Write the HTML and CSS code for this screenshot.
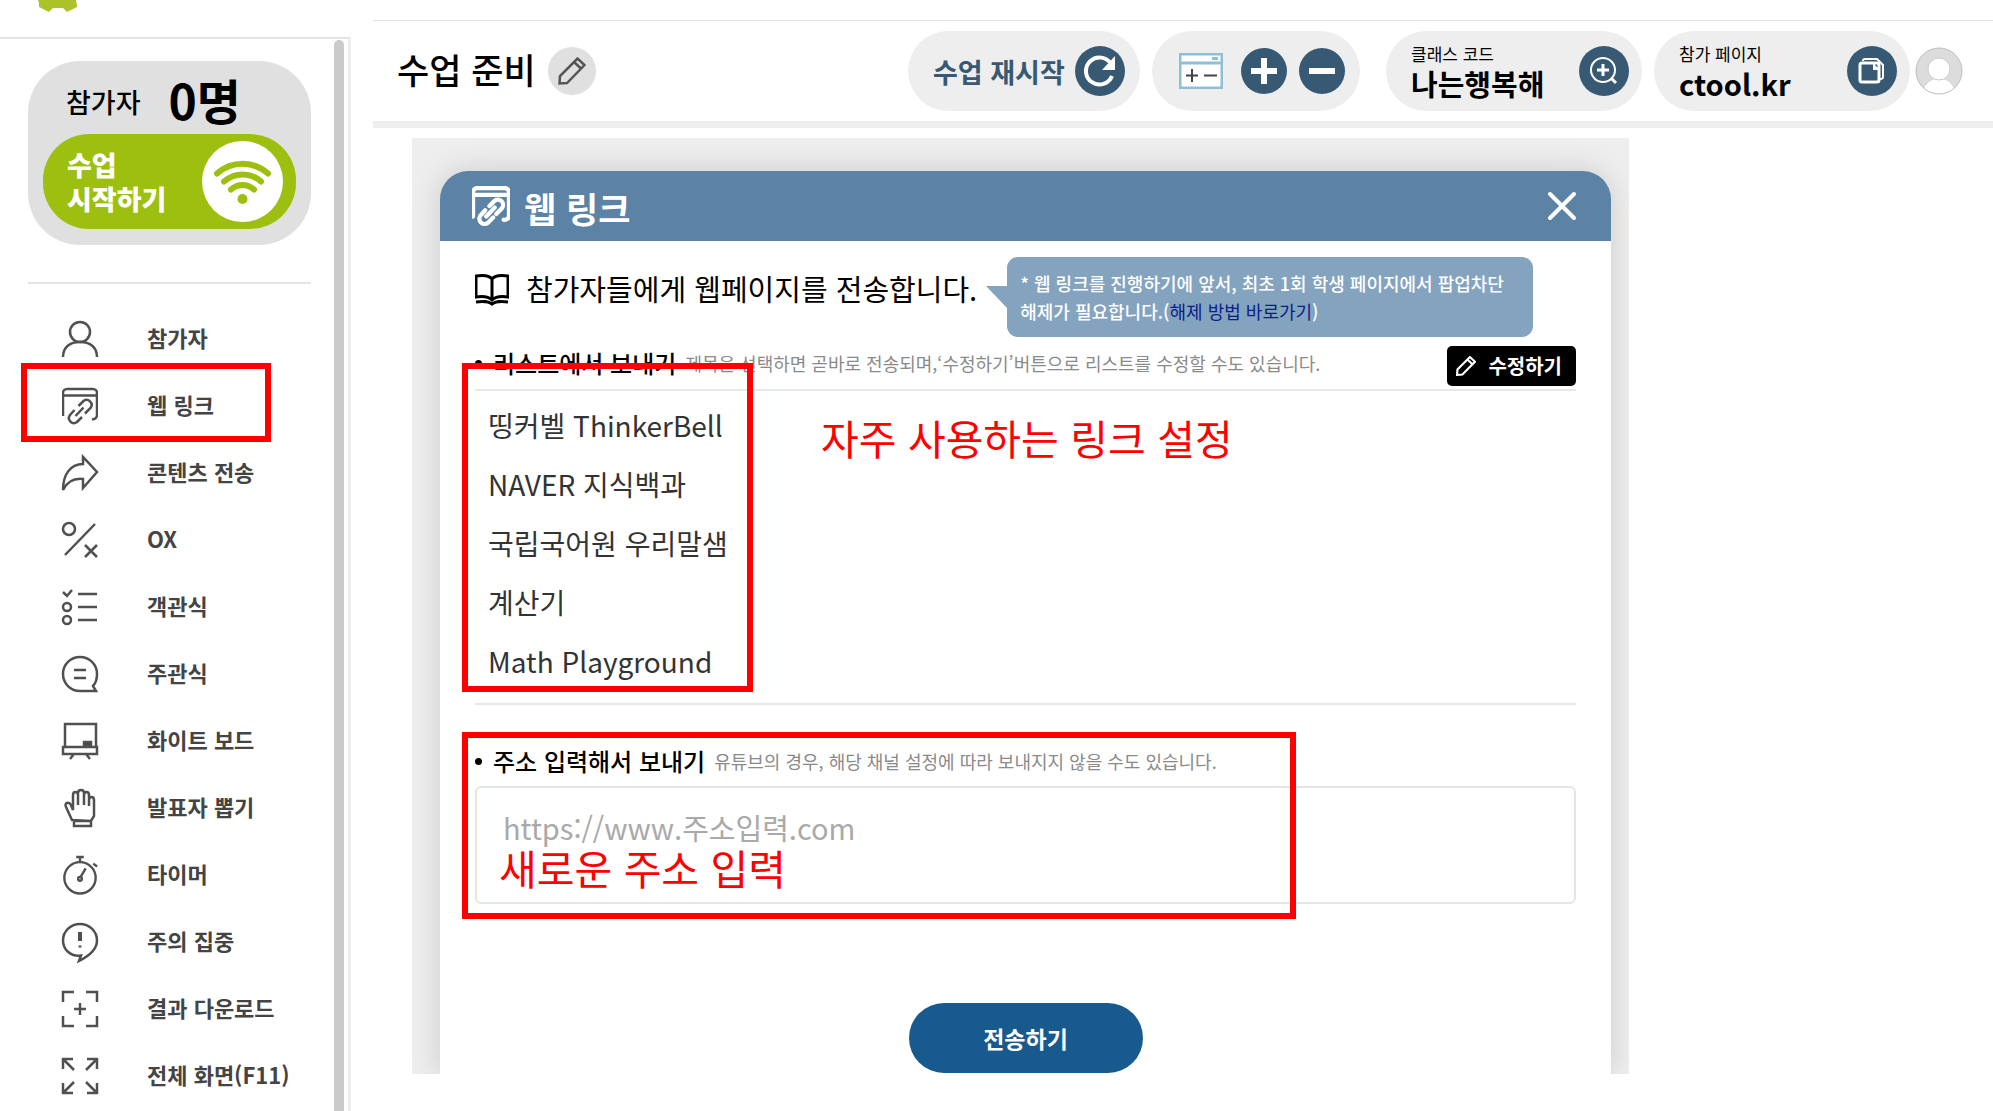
FILE: index.html
```
<!DOCTYPE html>
<html lang="ko">
<head>
    <meta charset="UTF-8">
    <meta name="viewport" content="width=device-width, initial-scale=1.0">
    <title>수업 준비 - 웹 링크</title>
    <link rel="stylesheet" href="styles.css">
</head>
<body>
    <!-- shared icon shapes -->
    <svg class="sprite" aria-hidden="true">
        <symbol id="icon-weblink" viewBox="0 0 36 36">
            <path d="M1 28V5a4 4 0 0 1 4-4h26a4 4 0 0 1 4 4v22a4 4 0 0 1-5 4M1 7.500h34"/>
            <path d="M16.500 18l5-5a5 5 0 0 1 7 7l-5.500 5.500M12.500 22l-4.500 5a5 5 0 0 0 7 7l5-5M13.500 28l8-8.500"/>
        </symbol>
        <symbol id="icon-pencil" viewBox="0 0 28 28">
            <path d="M1.500 26.500l.5-7.500L19.500 1.500l7 6.500L9 26zM16 5l7 6.500"/>
        </symbol>
    </svg>

    <div class="layout">
        <aside class="sidebar">
            <div class="logo">
                <svg width="40" height="12" viewBox="0 0 40 12"><path d="M0 0h38c0 2 1 4 1 7l-10 5-4-4H15l-4 4L1 7V3z" fill="#abc328"/></svg>
            </div>
            <div class="sidebar-main">
                <div class="sidebar-content">
                    <div class="status-card">
                        <p class="count"><span>참가자</span><strong>0명</strong></p>
                        <button type="button" class="start-btn">
                            <span>수업<br>시작하기</span>
                            <svg class="wifi" viewBox="0 0 81 81">
                                <circle cx="40.500" cy="40.500" r="40.500" fill="#fff"/>
                                <g fill="none" stroke="#9dc010" stroke-width="6" stroke-linecap="round">
                                    <path d="M15 32.500c15-13 36-13 51 0"/>
                                    <path d="M22 40.500c11-9.500 26-9.500 37 0"/>
                                    <path d="M29 48.500c7-6 16-6 23 0"/>
                                </g>
                                <circle cx="40.500" cy="58" r="5" fill="#9dc010"/>
                            </svg>
                        </button>
                    </div>
                    <nav class="menu">
                        <a href="#">
                            <svg viewBox="0 0 36 36"><circle cx="18" cy="11" r="10"/><path d="M1 36c0-10 7-15 17-15s17 5 17 15"/></svg>
                            참가자
                        </a>
                        <a href="#" class="marked">
                            <svg><use href="#icon-weblink"/></svg>
                            웹 링크
                        </a>
                        <a href="#">
                            <svg viewBox="0 0 36 36"><path d="M1 35C1 20 8 9 21 9V2l14 15-14 16v-9C11 23 5 27 1 35z"/></svg>
                            콘텐츠 전송
                        </a>
                        <a href="#">
                            <svg viewBox="0 0 36 36"><circle cx="7" cy="7" r="6"/><path d="M33 2L3 33M23 23l12 12M35 23L23 35"/></svg>
                            OX
                        </a>
                        <a href="#">
                            <svg viewBox="0 0 36 36"><path d="M1 3l4 4 5-6M16 5h19M16 18h19M16 31h19"/><circle cx="5" cy="18" r="4"/><circle cx="5" cy="31" r="4"/></svg>
                            객관식
                        </a>
                        <a href="#">
                            <svg viewBox="0 0 36 36"><path d="M34 35H18a17 17 0 1 1 17-17c0 5-1 9-4 12zM12 14h12M12 22h12"/></svg>
                            주관식
                        </a>
                        <a href="#">
                            <svg viewBox="0 0 36 36"><path d="M3 24V1h31v23M1 24h34v7H1zM12 31l-4 5M24 31l4 5"/><path d="M22 19h7v4h-7z" fill="#444"/></svg>
                            화이트 보드
                        </a>
                        <a href="#">
                            <svg viewBox="0 0 36 38"><path d="M10 31L4 18c-2-4 3-6 5-2l2 5V6c0-4 5-4 5 0v10V4c0-4 6-4 6 0v12V6c0-4 5-4 5 0v11-6c0-4 5-4 5 0v16l-3 5zM12 32h17v5H12z"/></svg>
                            발표자 뽑기
                        </a>
                        <a href="#">
                            <svg viewBox="0 0 36 40"><circle cx="18" cy="23" r="16.500"/><path d="M14 1h8M18 1v5M32 8l4 3M18 23l6-10"/><circle cx="18" cy="24" r="2"/></svg>
                            타이머
                        </a>
                        <a href="#">
                            <svg viewBox="0 0 36 38"><path d="M19 32.500C8 34 1 26 1 17.500 1 8 9 1 18 1s17 7 17 16.500C35 27 27 33 17 38z"/><path d="M18 9v9" stroke-width="4"/><path d="M18 22.500v2" stroke-width="3"/></svg>
                            주의 집중
                        </a>
                        <a href="#">
                            <svg viewBox="0 0 36 36"><path d="M1 11V1h11M24 1h11v10M1 25v10h11M24 35h11V25M18 12v12M12 18h12"/></svg>
                            결과 다운로드
                        </a>
                        <a href="#">
                            <svg viewBox="0 0 36 36"><path d="M1 11V1h10M1 1l11 11M25 1h10v10M35 1L24 12M1 25v10h10M1 35l11-11M25 35h10V25M35 35L24 24"/></svg>
                            전체 화면(F11)
                        </a>
                    </nav>
                </div>
                <div class="scroll-thumb"></div>
            </div>
        </aside>

        <main class="main">
            <header class="topbar">
                <h1>수업 준비</h1>
                <button type="button" class="edit-title" aria-label="제목 수정"><svg><use href="#icon-pencil"/></svg></button>

                <div class="pill-group">
                    <button type="button" class="pill restart">
                        수업 재시작
                        <svg class="round" viewBox="0 0 50 50">
                            <circle cx="25" cy="25" r="25" fill="#385974"/>
                            <path d="M37 30a13.500 13.500 0 1 1-1-12" fill="none" stroke="#fff" stroke-width="4"/>
                            <path d="M40 10v14H27z" fill="#fff"/>
                        </svg>
                    </button>
                    <div class="pill zoom-tools">
                        <svg class="window" viewBox="0 0 44 36">
                            <path d="M1 1h42v34H1z" fill="#fff" stroke="#8dbfd6" stroke-width="3"/>
                            <path d="M1 10h42" stroke="#8dbfd6" stroke-width="3"/>
                            <path d="M33 5.500h6" stroke="#8dbfd6" stroke-width="3"/>
                            <path d="M7 22.500h12M13 16v13M25 22.500h13" stroke="#444" stroke-width="2"/>
                        </svg>
                        <button type="button" class="round-btn" aria-label="확대"><svg viewBox="0 0 46 46"><circle cx="23" cy="23" r="23" fill="#385974"/><path d="M10 23h26M23 10v26" stroke="#fff" stroke-width="6"/></svg></button>
                        <button type="button" class="round-btn" aria-label="축소"><svg viewBox="0 0 46 46"><circle cx="23" cy="23" r="23" fill="#385974"/><path d="M10 23h26" stroke="#fff" stroke-width="6"/></svg></button>
                    </div>
                </div>

                <div class="pill-group">
                    <button type="button" class="pill info">
                        <span><small>클래스 코드</small><b>나는행복해</b></span>
                        <svg class="round" viewBox="0 0 50 50">
                            <circle cx="25" cy="25" r="25" fill="#385974"/>
                            <g fill="none" stroke="#fff" stroke-width="2"><circle cx="24" cy="24" r="12"/><path d="M32 32l5 5M24 18v12M18 24h12" stroke-width="3"/></g>
                        </svg>
                    </button>
                    <button type="button" class="pill info">
                        <span><small>참가 페이지</small><b>ctool.kr</b></span>
                        <svg class="round" viewBox="0 0 50 50">
                            <circle cx="25" cy="25" r="25" fill="#385974"/>
                            <g fill="none" stroke="#fff" stroke-width="2"><rect x="13" y="17" width="19" height="19" rx="2" stroke-width="3"/><path d="M16 15c0-1 1-2 2-2h12l6 6v12c0 2-1 2-3 2"/><path d="M27 18v5h5" fill="#fff"/></g>
                        </svg>
                    </button>
                </div>

                <button type="button" class="avatar" aria-label="내 계정">
                    <svg viewBox="0 0 48 48">
                        <clipPath id="face"><circle cx="24" cy="24" r="23"/></clipPath>
                        <circle cx="24" cy="24" r="23" fill="#dcdcdc"/>
                        <g fill="#fff" stroke="#ccc" clip-path="url(#face)"><circle cx="24" cy="48" r="17"/><circle cx="24" cy="22" r="11"/></g>
                        <circle cx="24" cy="24" r="23" fill="none" stroke="#bdbdbd"/>
                    </svg>
                </button>
            </header>

            <div class="stage">
                <section class="modal">
                    <div class="modal-header">
                        <svg><use href="#icon-weblink"/></svg>
                        <h2>웹 링크</h2>
                        <button type="button" class="close" aria-label="닫기">
                            <svg viewBox="0 0 30 30"><path d="M3 3l24 24M27 3L3 27"/></svg>
                        </button>
                    </div>

                    <div class="modal-body">
                        <div class="intro">
                            <svg viewBox="0 0 34 32"><path d="M17 5C14 1 8 1 1 2v21c7-1 12-1 16 3 4-4 9-4 16-3V2C26 1 20 1 17 5zM17 5v20M1 28c8-1 12-1 16 2 4-3 8-3 16-2"/></svg>
                            <p class="lead">참가자들에게 웹페이지를 전송합니다.</p>
                            <p class="bubble">* 웹 링크를 진행하기에 앞서, 최초 1회 학생 페이지에서 팝업차단<br>해제가 필요합니다.(<a href="#">해제 방법 바로가기</a>)</p>
                        </div>

                        <div class="section-title list-title">
                            <h3>리스트에서 보내기</h3>
                            <span class="hint">제목을 선택하면 곧바로 전송되며,‘수정하기’버튼으로 리스트를 수정할 수도 있습니다.</span>
                            <button type="button" class="edit-btn"><svg><use href="#icon-pencil"/></svg>수정하기</button>
                        </div>

                        <div class="link-area">
                            <ul class="links">
                                <li><a href="#">띵커벨 ThinkerBell</a></li>
                                <li><a href="#">NAVER 지식백과</a></li>
                                <li><a href="#">국립국어원 우리말샘</a></li>
                                <li><a href="#">계산기</a></li>
                                <li><a href="#">Math Playground</a></li>
                            </ul>
                            <div class="mark mark-list"></div>
                            <p class="note note-list">자주 사용하는 링크 설정</p>
                        </div>

                        <form class="url-area">
                            <div class="section-title">
                                <h3><label for="url">주소 입력해서 보내기</label></h3>
                                <span class="hint">유튜브의 경우, 해당 채널 설정에 따라 보내지지 않을 수도 있습니다.</span>
                            </div>
                            <textarea id="url" placeholder="https://www.주소입력.com"></textarea>
                            <div class="mark mark-url"></div>
                            <p class="note note-url">새로운 주소 입력</p>
                        </form>

                        <button type="button" class="send-btn">전송하기</button>
                    </div>
                </section>
            </div>
        </main>
    </div>
</body>
</html>
```
FILE: styles.css
```
*,
*::before,
*::after {
    margin: 0;
    padding: 0;
    box-sizing: border-box;
}
body {
    font-family: "Noto Sans CJK KR", "Noto Sans", sans-serif;
    background: #fff;
    color: #000;
    overflow: hidden;
}
button {
    font: inherit;
    color: inherit;
    background: none;
    border: none;
    cursor: pointer;
}
a {
    color: inherit;
    text-decoration: none;
}
svg {
    display: block;
    flex: none;
}
.sprite {
    position: absolute;
    width: 0;
    height: 0;
}
.layout {
    display: flex;
    height: 100vh;
}

/* sidebar */
.sidebar {
    flex: none;
    display: flex;
    flex-direction: column;
    width: 351px;
}
.logo {
    height: 37px;
    padding-left: 38px;
    flex: none;
}
.sidebar-main {
    flex: 1;
    display: flex;
    min-height: 0;
    overflow: hidden;
    border-top: 2px solid #e4e4e4;
    border-right: 3px solid #ededed;
}
.sidebar-content {
    flex: 1;
    padding: 22px 23px 0 28px;
}
.scroll-thumb {
    width: 10px;
    margin: 1px 4px 0 0;
    background: #cacaca;
    border-radius: 5px 5px 0 0;
}
.status-card {
    height: 184px;
    padding: 8px 15px 0;
    background: #e0e0e0;
    border-radius: 52px;
}
.count {
    display: flex;
    align-items: center;
    gap: 28px;
    height: 65px;
    padding-left: 23px;
    font-size: 27px;
    font-weight: 500;
}
.count strong {
    padding-bottom: 6px;
    font-size: 48px;
    font-weight: 700;
    line-height: 60px;
}
.start-btn {
    display: flex;
    align-items: center;
    justify-content: space-between;
    width: 100%;
    height: 95px;
    padding: 0 13px 0 24px;
    background: #9dc010;
    border-radius: 46px;
    color: #fff;
    font-size: 27px;
    font-weight: 900;
    line-height: 34px;
    text-align: left;
}
.wifi {
    width: 81px;
    height: 81px;
}
.menu {
    margin-top: 37px;
    padding-top: 19px;
    border-top: 2px solid #e4e4e4;
}
.menu a {
    position: relative;
    display: flex;
    align-items: center;
    gap: 49px;
    height: 67px;
    padding-left: 34px;
    color: #444;
    font-size: 22px;
    font-weight: 700;
}
.menu svg {
    width: 36px;
    height: 38px;
    margin-top: 4px;
    fill: none;
    stroke: #505050;
    stroke-width: 2.5;
    overflow: visible;
}
.menu .marked::after {
    content: "";
    position: absolute;
    left: -7px;
    top: -7px;
    width: 250px;
    height: 79px;
    border: 6px solid #f00;
}

/* top bar */
.main {
    flex: 1;
    min-width: 0;
    margin-left: 22px;
    padding-top: 20px;
}
.topbar {
    display: flex;
    align-items: center;
    height: 108px;
    padding: 0 30px 0 24px;
    border-top: 1px solid #dfe6ec;
    border-bottom: 7px solid #eee;
}
.topbar h1 {
    padding-bottom: 4px;
    font-size: 35px;
    font-weight: 500;
    line-height: 50px;
}
.edit-title {
    display: flex;
    align-items: center;
    justify-content: center;
    width: 48px;
    height: 48px;
    margin: 0 auto 0 12px;
    background: #e0e0e0;
    border-radius: 50%;
}
.edit-title svg {
    width: 28px;
    height: 28px;
    fill: none;
    stroke: #555;
    stroke-width: 2.5;
}
.pill-group {
    display: flex;
    gap: 12px;
    margin-left: 26px;
}
.pill {
    display: flex;
    align-items: center;
    justify-content: space-between;
    height: 80px;
    background: #eee;
    border-radius: 40px;
}
.round {
    width: 50px;
    height: 50px;
}
.restart {
    width: 232px;
    padding: 0 15px 0 25px;
    color: #385974;
    font-size: 27px;
    font-weight: 700;
}
.zoom-tools {
    gap: 12px;
    padding: 0 15px 0 27px;
}
.window {
    width: 44px;
    height: 36px;
    margin-right: 6px;
}
.round-btn svg {
    width: 46px;
    height: 46px;
}
.info {
    width: 256px;
    padding: 0 13px 0 25px;
    text-align: left;
}
.info small,
.info b {
    display: block;
}
.info small {
    font-size: 17px;
    line-height: 24px;
}
.info b {
    font-size: 29px;
    font-weight: 700;
    line-height: 34px;
}
.avatar {
    margin-left: 5px;
}
.avatar svg {
    width: 48px;
    height: 48px;
}

/* web link window */
.stage {
    margin: 10px 364px 0 39px;
    padding: 33px 18px 0 28px;
    background: #eee;
    overflow: hidden;
}
.modal {
    background: #fff;
    border-radius: 28px 28px 0 0;
    box-shadow: 0 0 30px rgba(0, 0, 0, 0.15);
}
.modal-header {
    display: flex;
    align-items: center;
    height: 70px;
    padding: 0 34px 0 32px;
    background: #5c83a5;
    border-radius: 28px 28px 0 0;
    color: #fff;
}
.modal-header svg {
    width: 38px;
    height: 40px;
    fill: none;
    stroke: #fff;
    stroke-width: 4;
    stroke-linecap: round;
    overflow: visible;
}
.modal-header h2 {
    margin-left: 14px;
    padding-top: 4px;
    font-size: 35px;
    font-weight: 700;
    line-height: 50px;
}
.close {
    margin-left: auto;
}
.modal-header .close svg {
    width: 30px;
    height: 30px;
}
.modal-body {
    padding: 16px 35px 1px;
}
.intro {
    display: flex;
    align-items: center;
}
.intro svg {
    width: 34px;
    height: 32px;
    margin-bottom: 14px;
    fill: none;
    stroke: #000;
    stroke-width: 3;
}
.lead {
    margin: 0 30px 18px 17px;
    font-size: 29px;
    font-weight: 400;
    white-space: nowrap;
}
.bubble {
    position: relative;
    width: 526px;
    padding: 12px 13px;
    background: #84a3be;
    border-radius: 11px;
    color: #fff;
    font-size: 18px;
    font-weight: 500;
    line-height: 28px;
    white-space: nowrap;
}
.bubble::before {
    content: "";
    position: absolute;
    left: -21px;
    top: 29px;
    border-top: 23px solid #84a3be;
    border-left: 22px solid transparent;
}
.bubble a {
    color: #0a1e8c;
    font-weight: 400;
}
.section-title {
    display: flex;
    align-items: center;
    white-space: nowrap;
}
.section-title h3 {
    display: flex;
    align-items: center;
    font-size: 24px;
    font-weight: 500;
    line-height: 36px;
}
.section-title h3::before {
    content: "";
    width: 7px;
    height: 7px;
    margin-right: 11px;
    background: #000;
    border-radius: 50%;
}
.hint {
    margin-left: 9px;
    color: #8a8a8a;
    font-size: 18px;
    line-height: 26px;
}
.list-title {
    height: 54px;
    border-bottom: 2px solid #e8e8e8;
}
.edit-btn {
    display: flex;
    align-items: center;
    gap: 12px;
    height: 40px;
    margin: 5px 0 0 auto;
    padding: 0 14px 0 9px;
    background: #000;
    border-radius: 5px;
    color: #fff;
    font-size: 20px;
    font-weight: 700;
}
.edit-btn svg {
    width: 20px;
    height: 20px;
    fill: none;
    stroke: #fff;
    stroke-width: 3;
}
.link-area {
    position: relative;
    padding: 5px 13px 12px;
    border-bottom: 2px solid #e8e8e8;
}
.links {
    list-style: none;
}
.links a {
    display: block;
    color: #333;
    font-size: 28px;
    line-height: 59px;
}
.url-area {
    position: relative;
    padding-top: 38px;
}
.url-area textarea {
    display: block;
    width: 100%;
    height: 118px;
    margin-top: 7px;
    padding: 18px 26px;
    border: 2px solid #e6e6e6;
    border-radius: 6px;
    font-family: inherit;
    font-size: 29px;
    line-height: 42px;
    resize: none;
}
.url-area textarea::placeholder {
    color: #a9a9a9;
}
.send-btn {
    display: block;
    width: 234px;
    height: 70px;
    margin: 99px auto 0;
    background: #185a8d;
    border-radius: 35px;
    color: #fff;
    font-size: 23px;
    font-weight: 700;
}

/* red guide marks over the page */
.mark {
    position: absolute;
    border: 6px solid #f00;
    pointer-events: none;
}
.mark-list {
    left: -13px;
    top: -28px;
    width: 291px;
    height: 329px;
}
.mark-url {
    left: -13px;
    top: 27px;
    width: 834px;
    height: 187px;
}
.note {
    position: absolute;
    color: #f00;
    font-size: 41px;
    font-weight: 400;
    line-height: 50px;
    white-space: nowrap;
}
.note-list {
    left: 346px;
    top: 21px;
}
.note-url {
    left: 24px;
    top: 137px;
}
```
